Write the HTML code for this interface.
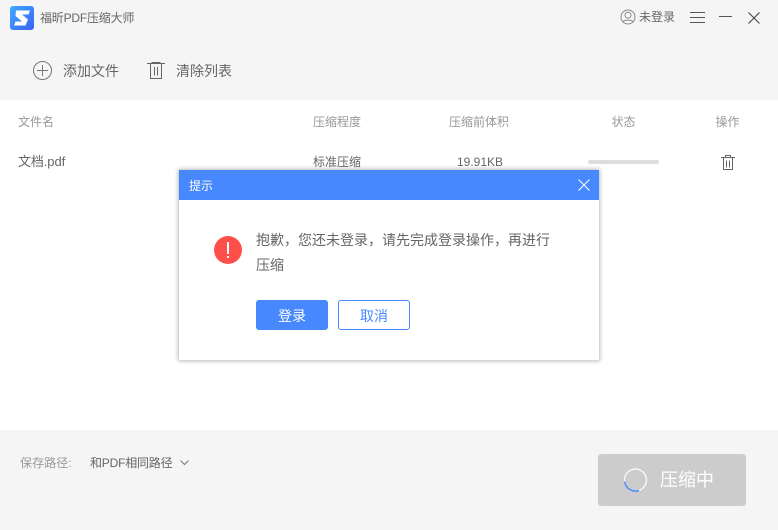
<!DOCTYPE html>
<html lang="zh"><head><meta charset="utf-8"><style>
html,body{margin:0;padding:0}
body{width:778px;height:530px;position:relative;overflow:hidden;background:#fff;font-family:"Liberation Sans","Noto Sans CJK SC",sans-serif;font-size:13px;color:#666}
.t{position:absolute;white-space:nowrap;line-height:20px}
.a{position:absolute}
svg{position:absolute;overflow:visible}
</style></head><body>
<div class="a" style="left:0;top:0;width:778px;height:100px;background:#f5f5f5"></div>
<div class="a" style="left:0;top:430px;width:778px;height:100px;background:#f5f5f5"></div>

<svg style="left:10px;top:6px" width="24" height="24" viewBox="0 0 24 24"><defs><linearGradient id="g" x1="0" y1="0" x2="1" y2="1"><stop offset="0" stop-color="#3fa9ff"/><stop offset="1" stop-color="#3c62f5"/></linearGradient></defs><rect width="24" height="24" rx="3" fill="url(#g)"/><path d="M6 4.500H20L18.500 8.500H12L18 13.500L15.500 19.500H4L5.500 15.500H12L5.500 10Z" fill="#fff"/></svg>
<div class="t" style="left:40px;top:8px;font-size:12px;letter-spacing:-.2px;color:#666">福昕PDF压缩大师</div>

<svg style="left:620px;top:8.500px" width="16" height="16" viewBox="0 0 16 16" fill="none" stroke="#888" stroke-width="1"><circle cx="8" cy="8" r="7"/><circle cx="8" cy="6.200" r="3"/><path d="M3 13C4 10.500 12 10.500 13 13"/></svg>
<div class="t" style="left:639px;top:7px;font-size:12px;color:#666">未登录</div>
<svg style="left:690px;top:12px" width="16" height="12" fill="none" stroke="#555" stroke-width="1"><path d="M0 .5H15M0 5.500H15M0 10.500H15"/></svg>
<svg style="left:719px;top:13px" width="14" height="6" fill="none" stroke="#555" stroke-width="1"><path d="M0 3.500H13"/></svg>
<svg style="left:748px;top:12px" width="12" height="12" fill="none" stroke="#444" stroke-width="1.100"><path d="M.5 .5L11.500 11.500M11.500 .5L.5 11.500"/></svg>

<svg style="left:33px;top:60.500px" width="19" height="19" fill="none" stroke="#777" stroke-width="1"><circle cx="9.500" cy="9.500" r="9"/><path d="M4 9.500H15M9.500 4V15"/></svg>
<div class="t" style="left:63px;top:61px;font-size:14px;color:#666">添加文件</div>
<svg style="left:147px;top:61px" width="18" height="18" fill="none" stroke="#666" stroke-width="1"><path d="M0 2.500H18M5 2V1.500H13V2M3.500 3V17.500H14.500V3M7.500 6V14.500M10.500 6V14.500"/></svg>
<div class="t" style="left:176px;top:61px;font-size:14px;color:#666">清除列表</div>

<div class="t" style="left:18px;top:112px;font-size:12px;color:#999">文件名</div>
<div class="t" style="left:313px;top:112px;font-size:12px;color:#999">压缩程度</div>
<div class="t" style="left:449px;top:112px;font-size:12px;color:#999">压缩前体积</div>
<div class="t" style="left:611.500px;top:112px;font-size:12px;color:#999">状态</div>
<div class="t" style="left:715.500px;top:112px;font-size:12px;color:#999">操作</div>

<div class="t" style="left:18px;top:152px;font-size:13px;letter-spacing:-.1px;color:#666">文档.pdf</div>
<div class="t" style="left:313px;top:152px;font-size:12px;color:#666">标准压缩</div>
<div class="t" style="left:457px;top:152px;font-size:12px;color:#666">19.91KB</div>
<div class="a" style="left:588px;top:160px;width:71px;height:4px;border-radius:2px;background:#ddd"></div>
<svg style="left:721px;top:155px" width="14" height="15" fill="none" stroke="#666" stroke-width="1"><path d="M0 2.500H14M4.500 2V.5H9.500V2M2.500 3V14.500H11.500V3M5.500 5.500V12.500M8.500 5.500V12.500"/></svg>

<div class="t" style="left:20px;top:453px;font-size:12px;letter-spacing:.1px;color:#999">保存路径:</div>
<div class="t" style="left:90px;top:453px;font-size:12px;letter-spacing:-.2px;color:#666">和PDF相同路径</div>
<svg style="left:180px;top:460px" width="9" height="6" fill="none" stroke="#777" stroke-width="1"><path d="M.5 .5L4.500 4.500L8.500 .5"/></svg>

<div class="a" style="left:598px;top:454px;width:148px;height:52px;border-radius:3px;background:#ccc"></div>
<svg style="left:624px;top:468px" width="24" height="24" fill="none" stroke-width="1.500"><circle cx="11.500" cy="12" r="11" stroke="#f5f5f5"/><path d="M.6 13.500A11 11 0 0 0 15 22.500" stroke="#4c8bff"/></svg>
<div class="t" style="left:660px;top:470px;font-size:18px;color:#fff">压缩中</div>

<div class="a" style="left:179px;top:170px;width:420px;height:190px;background:#fff;box-shadow:0 0 4px 1px rgba(0,0,0,.28)"></div>
<div class="a" style="left:179px;top:170px;width:420px;height:30px;background:#4788ff"></div>
<div class="t" style="left:189px;top:176px;font-size:12px;color:#fff">提示</div>
<svg style="left:578px;top:179px" width="12" height="12" fill="none" stroke="#fff" stroke-width="1"><path d="M.5 .5L11.500 11.500M11.500 .5L.5 11.500"/></svg>
<svg style="left:214px;top:236px" width="28" height="28"><circle cx="14" cy="14" r="14" fill="#ff4f4b"/><rect x="13" y="6" width="2" height="12" fill="#fff"/><rect x="13" y="20" width="2" height="2" fill="#fff"/></svg>
<div class="t" style="left:256px;top:230px;font-size:14px;color:#666">抱歉，您还未登录，请先完成登录操作，再进行</div>
<div class="t" style="left:256px;top:255px;font-size:14px;color:#666">压缩</div>
<div class="a" style="left:256px;top:300px;width:72px;height:30px;border-radius:3px;background:#4788ff;color:#fff;font-size:14px;line-height:32px;text-align:center">登录</div>
<div class="a" style="left:338px;top:300px;width:70px;height:28px;border:1px solid #4788ff;border-radius:3px;background:#fff;color:#4788ff;font-size:14px;line-height:30px;text-align:center">取消</div>
</body></html>
